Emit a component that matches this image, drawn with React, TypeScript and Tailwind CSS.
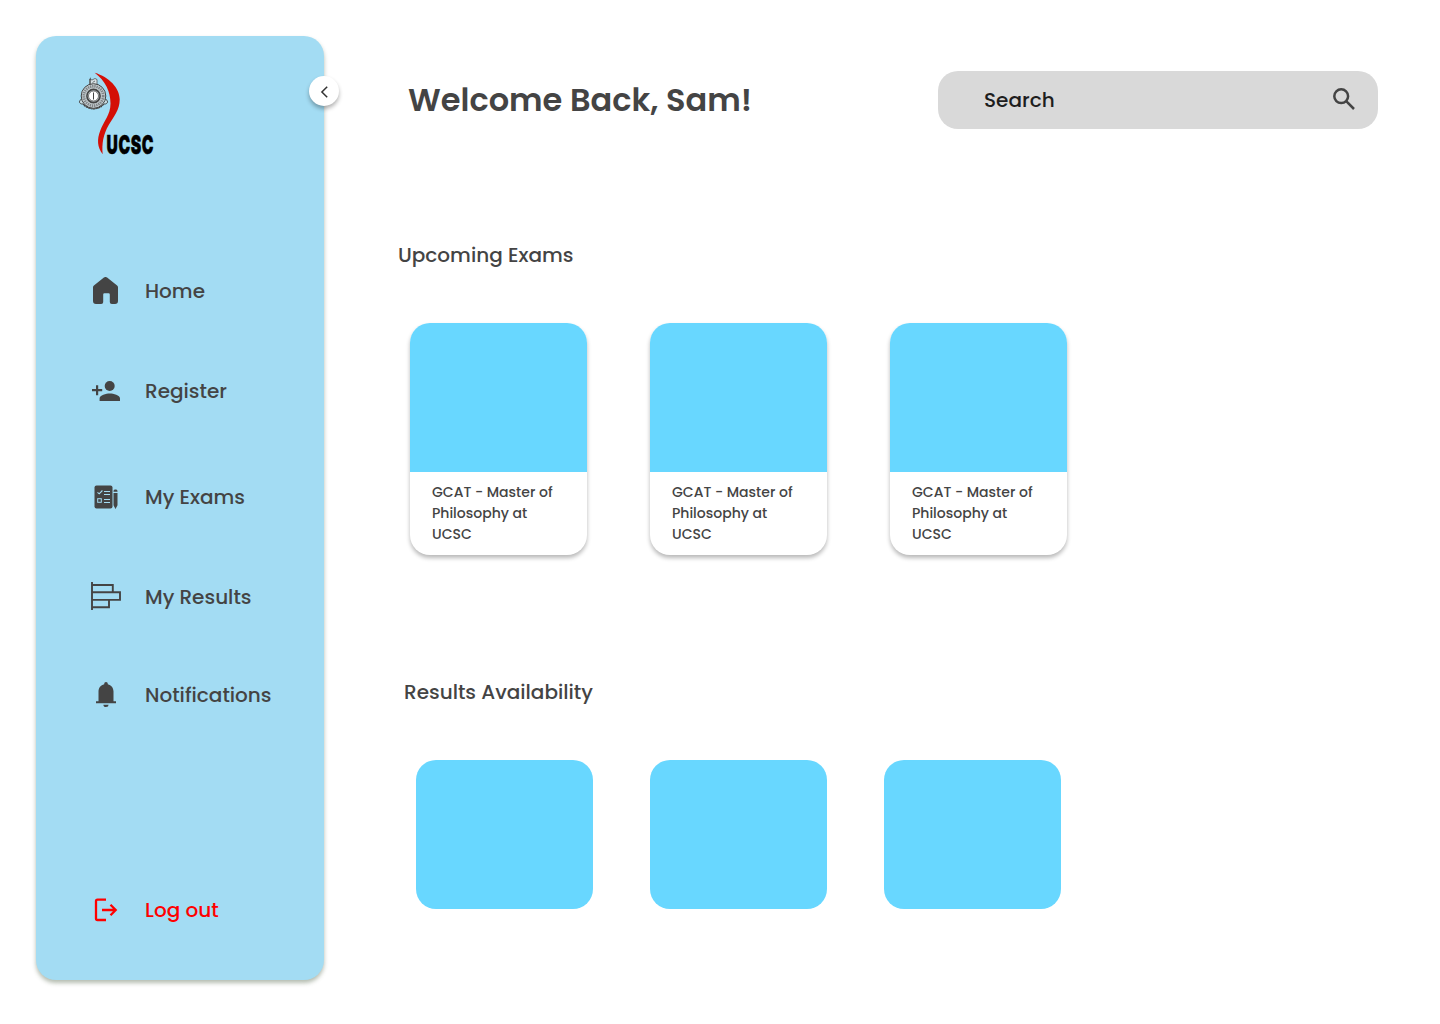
import React from "react";

const HomeIcon = () => (
  <svg width="25" height="27" viewBox="0 0 25 27" fill="#444" className="mb-[1px] ml-[1px]">
    <path d="M10.9.6a2.6 2.6 0 0 1 3.2 0l9.700 7.600c.8.6 1.200 1.200 1.200 2.200V24a3 3 0 0 1-3 3h-3.200a2 2 0 0 1-2-2v-7.500a1.200 1.200 0 0 0-1.200-1.200h-4.200a1.200 1.200 0 0 0-1.200 1.200V25a2 2 0 0 1-2 2H3a3 3 0 0 1-3-3V10.400c0-1 .4-1.600 1.200-2.200z" />
  </svg>
);

const RegisterIcon = () => (
  <svg width="28" height="20" viewBox="0 0 28 20" fill="#444">
    <circle cx="17.700" cy="5" r="5" />
    <path d="M7.600 20v-2.600c0-3.400 6.600-5 10.200-5s10.200 1.600 10.200 5V20zM4 4.200h2.200v3.900h4v2.200h-4v3.900H4v-3.900H0V8.100h4z" />
  </svg>
);

const ExamsIcon = () => (
  <svg width="24" height="24" viewBox="0 0 24 24" fill="none" className="ml-[2px]">
    <rect x=".5" y=".5" width="18" height="23" rx="2" fill="#444" />
    <path d="M3.500 7.300l1.700 1.500 3.200-3.300M10 6.500h6M10 9.500h6M10 14.500h6M10 17.500h6" stroke="#a3dcf3" strokeWidth="1.100" />
    <rect x="3.700" y="13.700" width="3.600" height="3.600" stroke="#a3dcf3" />
    <path d="M19.500 6.700V6c0-1 .8-1.600 2-1.600s2 .6 2 1.600v.7zM19.500 8h4v12.300L21.500 24l-2-3.700z" fill="#444" />
  </svg>
);

const ResultsIcon = () => (
  <svg width="30" height="28" viewBox="0 0 30 28" fill="none" stroke="#444" strokeWidth="1.900" className="-ml-[1px] mb-[2px]">
    <path d="M1 0v28M1 3h20.800v7.200M1 10.200h28v7.700H1M18 17.900v7.300H1" />
  </svg>
);

const BellIcon = () => (
  <svg width="20" height="26" viewBox="0 0 20 26" fill="#444" className="ml-[4px]">
    <path d="M8.200 1.800a1.800 1.800 0 0 1 3.600 0v.4c3.400.8 5.700 3.700 5.700 7.300v9.800H20v2H0v-2h2.500V9.500c0-3.600 2.300-6.500 5.700-7.300zM7.400 22.800h5.200a2.600 2.300 0 0 1-5.200 0z" />
  </svg>
);

const LogoutIcon = () => (
  <svg width="24" height="24" viewBox="0 0 24 24" fill="none" stroke="#f00" strokeWidth="2.300" className="ml-[1.500px]">
    <path d="M12 1.700H3.500A1.500 1.500 0 0 0 2 3.200v17.300A1.500 1.500 0 0 0 3.500 22H12M8 12h14M16.500 6.800l5.200 5.200-5.200 5.200" />
  </svg>
);

const Logo = () => (
  <svg width="90" height="100" viewBox="76 68 90 100" role="img" aria-label="UCSC" className="overflow-visible">
    <g fill="none" stroke="#444">
      <path d="M89.500 84.500V79l2.500 1 3-1.500 2 1v5z" fill="#d8e4e8" strokeWidth=".7" />
      <path d="M90.500 77.700v7M92.500 82.500l2.500-1.500" strokeWidth=".7" />
      <path d="M82 99c-3.500 1-3.500 5.500 1 5 6 6.500 15 6.500 21 0 4.500.5 4.500-4 1-5" fill="#c8dde3" strokeWidth="1" />
      <path d="M84 105c6 4.500 13 4.500 19 0" strokeWidth="2" strokeDasharray="1.500 1" />
      <circle cx="93.500" cy="96" r="12.300" fill="#c5ced1" strokeWidth="1" />
      <circle cx="93.500" cy="96" r="9.700" strokeWidth="2.700" stroke="#808588" strokeDasharray="1.400 .8" />
      <circle cx="93.500" cy="96" r="6.600" strokeWidth="1.600" stroke="#444" />
      <circle cx="93.500" cy="96" r="5" fill="#fff" strokeWidth=".7" />
      <path d="M93.500 92.500v7" strokeWidth="1" />
    </g>
    <path d="M94.700 72.800C109 77 119.700 88 119.700 99.500c0 10.500-6 17-11 25.500-5.500 9.500-7 19-6 29.200-5.500-7-5.800-15-2.500-23.500 3.600-9.500 10.300-16 10.300-27.200 0-12-5-22.500-15.800-30.700z" fill="#d40f06" />
    <g fontSize="26" fontWeight="900" fontFamily="Inter, sans-serif" stroke="#000" strokeWidth=".5">
      <text x="106.500" y="154" textLength="47.500" lengthAdjust="spacingAndGlyphs" letterSpacing="1">UCSC</text>
    </g>
  </svg>
);

const navItems = [
  { label: "Home", icon: <HomeIcon />, row: "h-[100px]" },
  { label: "Register", icon: <RegisterIcon />, row: "h-[100px]" },
  { label: "My Exams", icon: <ExamsIcon />, row: "h-[112px]" },
  { label: "My Results", icon: <ResultsIcon />, row: "h-[88px]" },
  { label: "Notifications", icon: <BellIcon />, row: "h-[108px]" },
];

const Sidebar = () => (
  <aside className="relative flex h-[944px] w-[288px] shrink-0 flex-col rounded-[20px] bg-[#a3dcf3] shadow-[0_3px_4px_rgba(70,90,60,0.4)]">
    <div className="ml-10 mt-8 h-[90px]"><Logo /></div>
    <nav className="mt-[83px] flex flex-col">
      {navItems.map((item) => (
        <a key={item.label} className={`flex items-center pl-14 ${item.row}`}>
          <span className="flex w-[53px] shrink-0 items-center">{item.icon}</span>
          <span className="whitespace-nowrap">{item.label}</span>
        </a>
      ))}
    </nav>
    <a className="mb-[54px] mt-auto flex h-8 items-center pl-14 text-[#ff0000]">
      <span className="flex w-[53px] shrink-0 items-center"><LogoutIcon /></span>
      <span className="whitespace-nowrap">Log out</span>
    </a>
    <button aria-label="Collapse" className="absolute -right-[15px] top-10 flex size-[30px] items-center justify-center rounded-full bg-white shadow-[0_3px_4px_rgba(0,0,0,0.3)]">
      <svg width="8" height="12" viewBox="0 0 8 12" fill="none" stroke="#333" strokeWidth="1.500" className="mt-[1px]"><path d="M7.200.7 1.900 6l5.300 5.300" /></svg>
    </button>
  </aside>
);

const ExamCard = () => (
  <article className="h-[232px] w-[177px] overflow-hidden rounded-[20px] bg-white shadow-[0_3px_4px_rgba(0,0,0,0.28)]">
    <div className="h-[149px] bg-[#68d7ff]" />
    <p className="pl-[22px] pt-[10px] text-[14px] leading-[21px]">
      <span className="block whitespace-nowrap">GCAT - Master of</span>
      <span className="block whitespace-nowrap">Philosophy at</span>
      <span className="block">UCSC</span>
    </p>
  </article>
);

export default function App() {
  return (
    <div className="flex h-[1024px] w-[1440px] overflow-hidden bg-white p-9 font-['Poppins','Inter',sans-serif] text-[20px] font-medium text-[#444]">
      <Sidebar />
      <main className="flex flex-1 flex-col">
        <header className="ml-[84px] mr-[26px] mt-[35px] flex h-[58px] items-center justify-between">
          <h1 className="whitespace-nowrap text-[32px] font-semibold leading-[48px]">Welcome Back, Sam!</h1>
          <div className="flex h-[58px] w-[440px] items-center justify-between rounded-[20px] bg-[#d9d9d9] pl-[46px] pr-[23px] text-[#1e1e1e]">
            <span>Search</span>
            <svg width="22" height="22" viewBox="0 0 22 22" fill="none" stroke="#444" strokeWidth="2.500" className="-mt-[2px]">
              <circle cx="8.200" cy="8.200" r="6.900" /><path d="m13.200 13.200 7.800 7.800" />
            </svg>
          </div>
        </header>
        <section className="mt-[111px]">
          <h2 className="ml-[74px] h-[30px] leading-[30px]">Upcoming Exams</h2>
          <div className="ml-[86px] mt-[53px] flex gap-[63px]">
            <ExamCard /><ExamCard /><ExamCard />
          </div>
        </section>
        <section className="mt-[122px]">
          <h2 className="ml-20 h-[30px] leading-[30px]">Results Availability</h2>
          <div className="ml-[92px] mt-[53px] flex gap-[57px]">
            {[0, 1, 2].map((i) => <div key={i} className="h-[149px] w-[177px] rounded-[20px] bg-[#68d7ff]" />)}
          </div>
        </section>
      </main>
    </div>
  );
}
